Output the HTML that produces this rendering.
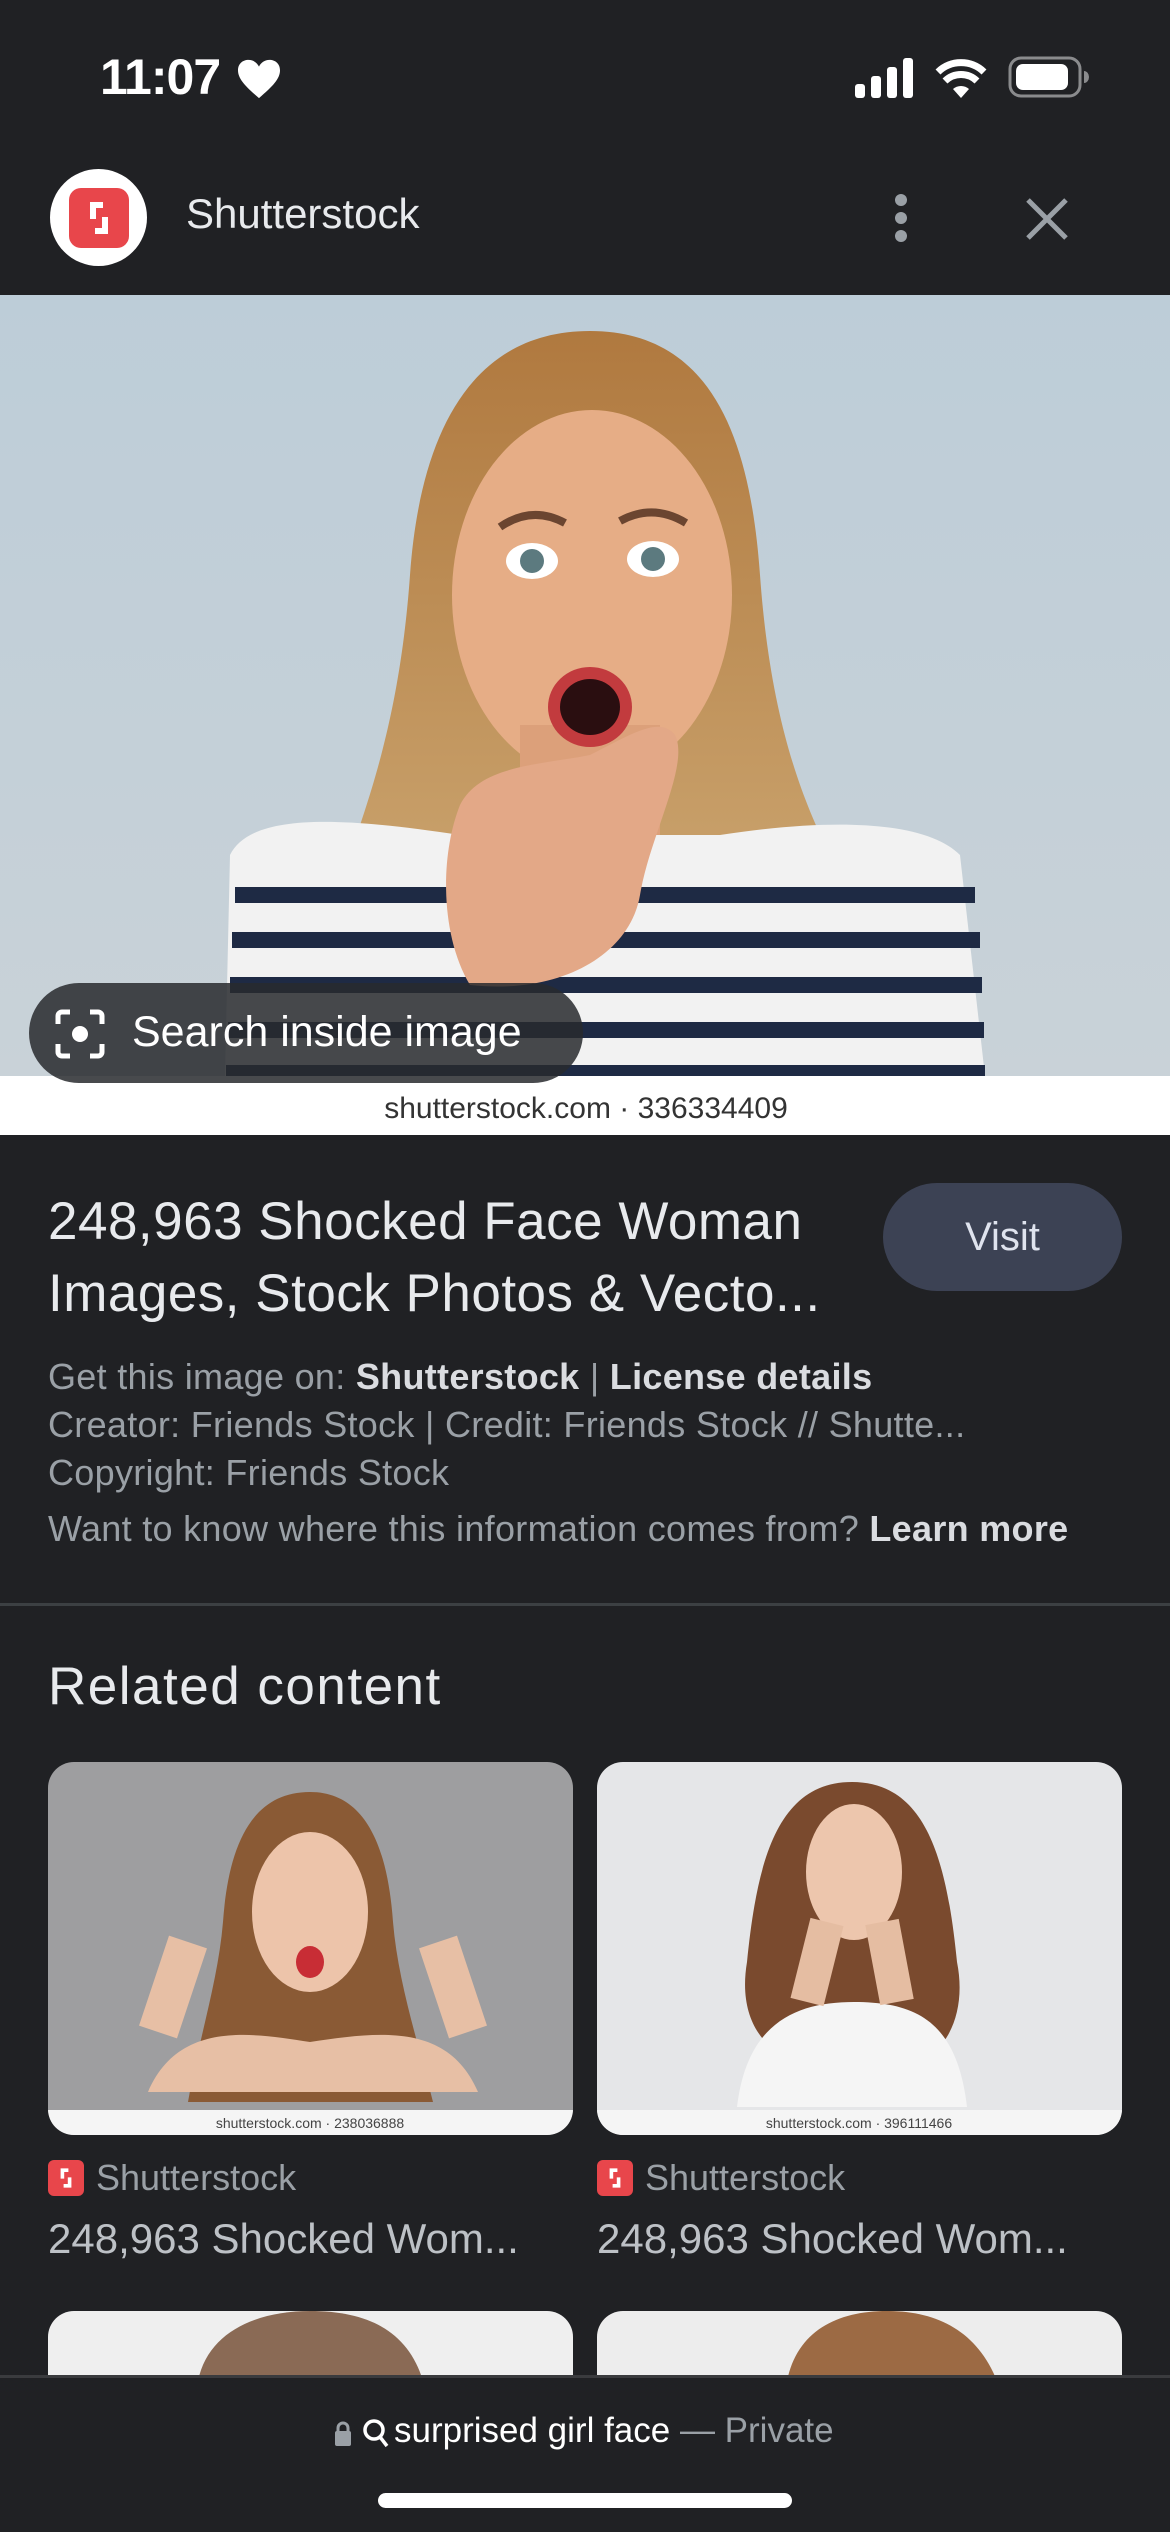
<!DOCTYPE html>
<html><head><meta charset="utf-8">
<style>
*{margin:0;padding:0;box-sizing:border-box}
html,body{width:1170px;height:2532px;background:#202124;overflow:hidden;font-family:"Liberation Sans",Arial,sans-serif;color:#e8eaed}
.abs{position:absolute}
</style></head><body>
<div class="abs" style="left:0;top:0;width:1170px;height:2532px;background:#202124">

<div class="abs" style="left:100px;top:48px;font-size:50px;font-weight:600;color:#fff;letter-spacing:-1px">11:07</div>
<svg class="abs" style="left:236px;top:58px" width="46" height="42" viewBox="0 0 24 22"><path d="M12 21 C5 15 1 11 1 6.5 C1 3 3.5 1 6.5 1 C9 1 11 2.5 12 4.5 C13 2.5 15 1 17.5 1 C20.5 1 23 3 23 6.5 C23 11 19 15 12 21Z" fill="#fff"/></svg>
<svg class="abs" style="left:855px;top:58px" width="60" height="40"><rect x="0" y="26" width="10" height="14" rx="3" fill="#fff"/><rect x="16" y="18" width="10" height="22" rx="3" fill="#fff"/><rect x="32" y="9" width="10" height="31" rx="3" fill="#fff"/><rect x="48" y="0" width="10" height="40" rx="3" fill="#fff"/></svg>
<svg class="abs" style="left:935px;top:58px" width="52" height="40" viewBox="0 0 52 40"><path d="M26 40 L18 31 A12 12 0 0 1 34 31Z" fill="#fff"/><path d="M10 23 A23 23 0 0 1 42 23" stroke="#fff" stroke-width="7" fill="none"/><path d="M3 14 A33 33 0 0 1 49 14" stroke="#fff" stroke-width="7" fill="none"/></svg>
<svg class="abs" style="left:1008px;top:56px" width="82" height="42"><rect x="2" y="2" width="70" height="38" rx="11" fill="none" stroke="#8a8b8d" stroke-width="3"/><rect x="8" y="8" width="52" height="26" rx="7" fill="#fff"/><path d="M76 15 a5 6 0 0 1 0 12z" fill="#8a8b8d"/></svg>

<div class="abs" style="left:50px;top:169px;width:97px;height:97px;border-radius:50%;background:#fff"></div>
<div class="abs" style="left:69px;top:188px;width:60px;height:60px;border-radius:12px;background:#e8464b"></div>
<svg class="abs" style="left:69px;top:188px" width="60" height="60" viewBox="0 0 60 60"><path d="M34 17 H24 V31" stroke="#fff" stroke-width="6" fill="none"/><path d="M26 43 H36 V29" stroke="#fff" stroke-width="6" fill="none"/></svg>
<div class="abs" style="left:186px;top:190px;font-size:42px;color:#e8eaed">Shutterstock</div>
<svg class="abs" style="left:890px;top:192px" width="22" height="52"><circle cx="11" cy="8" r="6" fill="#9aa0a6"/><circle cx="11" cy="26" r="6" fill="#9aa0a6"/><circle cx="11" cy="44" r="6" fill="#9aa0a6"/></svg>
<svg class="abs" style="left:1024px;top:196px" width="46" height="46"><path d="M4 4 L42 42 M42 4 L4 42" stroke="#9aa0a6" stroke-width="5"/></svg>

<svg class="abs" style="left:0;top:295px" width="1170" height="840" viewBox="0 0 1170 840">
<defs><linearGradient id="bg" x1="0" y1="0" x2="0" y2="1"><stop offset="0" stop-color="#bdcdd8"/><stop offset="1" stop-color="#c9d2d8"/></linearGradient>
<linearGradient id="hair" x1="0" y1="0" x2="0" y2="1"><stop offset="0" stop-color="#b0793f"/><stop offset="1" stop-color="#c8a06a"/></linearGradient></defs>
<rect width="1170" height="781" fill="url(#bg)"/>
<path d="M590 36 C470 36 420 140 410 280 C400 420 370 500 350 560 L830 560 C800 500 770 420 760 280 C750 140 710 36 590 36Z" fill="url(#hair)"/>
<ellipse cx="592" cy="300" rx="140" ry="185" fill="#e6ad86"/>
<path d="M520 430 L520 560 L660 560 L660 430Z" fill="#dca07a"/>
<path d="M230 560 C250 520 330 520 460 540 L720 540 C850 520 930 530 960 560 L985 781 L225 781Z" fill="#f2f2f2"/>
<g stroke="#1e2a44" stroke-width="16" fill="none">
<path d="M235 600 H975"/><path d="M232 645 H980"/><path d="M230 690 H982"/><path d="M228 735 H984"/><path d="M226 778 H985"/></g>
<ellipse cx="532" cy="266" rx="26" ry="18" fill="#fff"/><circle cx="532" cy="266" r="12" fill="#5c7a7f"/>
<ellipse cx="653" cy="264" rx="26" ry="18" fill="#fff"/><circle cx="653" cy="264" r="12" fill="#5c7a7f"/>
<path d="M500 232 Q532 210 565 228" stroke="#6b4530" stroke-width="8" fill="none"/><path d="M620 226 Q653 208 686 228" stroke="#6b4530" stroke-width="8" fill="none"/>
<ellipse cx="590" cy="412" rx="42" ry="40" fill="#c23b3e"/><ellipse cx="590" cy="412" rx="30" ry="28" fill="#2a0e10"/>
<path d="M460 510 C480 470 540 470 590 460 C630 440 660 420 675 440 C690 470 650 540 640 600 C630 660 560 700 470 690 C440 640 440 560 460 510Z" fill="#e3a887"/>
<rect x="0" y="781" width="1170" height="59" fill="#fff"/>
<text x="586" y="823" text-anchor="middle" font-family="Liberation Sans,sans-serif" font-size="30" fill="#333">shutterstock.com · 336334409</text>
</svg>
<div class="abs" style="left:29px;top:983px;width:554px;height:100px;border-radius:50px;background:rgba(40,42,46,0.85)"></div>
<svg class="abs" style="left:54px;top:1008px" width="52" height="52" viewBox="0 0 52 52"><path d="M4 16 V8 a4 4 0 0 1 4 -4 H16 M36 4 H44 a4 4 0 0 1 4 4 V16 M48 36 V44 a4 4 0 0 1 -4 4 H36 M16 48 H8 a4 4 0 0 1 -4 -4 V36" stroke="#fff" stroke-width="5" fill="none"/><circle cx="26" cy="26" r="8" fill="#fff"/></svg>
<div class="abs" style="left:132px;top:1008px;font-size:43px;color:#fff">Search inside image</div>

<div class="abs" style="left:48px;top:1186px;font-size:53px;line-height:72px;color:#e8eaed;width:840px;letter-spacing:0.5px">248,963 Shocked Face Woman<br>Images, Stock Photos &amp; Vecto...</div>
<div class="abs" style="left:883px;top:1183px;width:239px;height:108px;border-radius:54px;background:#3c4254;color:#dfe3ee;font-size:40px;text-align:center;line-height:108px">Visit</div>

<div class="abs" style="left:48px;top:1353px;font-size:36px;line-height:48px;color:#9aa0a6;letter-spacing:0.3px">Get this image on: <b style="color:#dadce0">Shutterstock</b> | <b style="color:#dadce0">License details</b><br>Creator: Friends Stock | Credit: Friends Stock // Shutte...<br>Copyright: Friends Stock</div>
<div class="abs" style="left:48px;top:1508px;font-size:36px;color:#9aa0a6;letter-spacing:0.3px">Want to know where this information comes from? <b style="color:#dadce0">Learn more</b></div>
<div class="abs" style="left:0;top:1603px;width:1170px;height:3px;background:#3c4043"></div>

<div class="abs" style="left:48px;top:1656px;font-size:53px;color:#e8eaed;letter-spacing:1.5px">Related content</div>

<svg class="abs" style="left:48px;top:1762px" width="525" height="373"><defs><clipPath id="c1"><rect width="525" height="373" rx="26"/></clipPath></defs><g clip-path="url(#c1)"><rect width="525" height="373" fill="#9e9ea0"/><path d="M262 30 C200 30 180 90 175 160 C170 220 150 280 140 340 L385 340 C370 280 350 220 345 160 C340 90 320 30 262 30Z" fill="#8a5a35"/><ellipse cx="262" cy="150" rx="58" ry="80" fill="#edc4aa"/><ellipse cx="262" cy="200" rx="14" ry="16" fill="#c82d35"/><path d="M100 330 C130 260 200 270 262 280 C330 270 400 260 430 330 Z" fill="#e7bfa5"/><path d="M140 180 L110 270 M390 180 L420 270" stroke="#e7bfa5" stroke-width="40"/><rect y="348" width="525" height="25" fill="#f5f5f5"/><text x="262" y="366" text-anchor="middle" font-size="14" fill="#444" font-family="Liberation Sans">shutterstock.com · 238036888</text></g></svg>
<svg class="abs" style="left:597px;top:1762px" width="525" height="373"><defs><clipPath id="c2"><rect width="525" height="373" rx="26"/></clipPath></defs><g clip-path="url(#c2)"><rect width="525" height="373" fill="#e5e6e8"/><path d="M255 20 C180 20 160 100 150 200 C140 260 170 290 200 300 L320 300 C350 290 370 250 360 200 C350 100 330 20 255 20Z" fill="#7a4a2e"/><ellipse cx="257" cy="110" rx="48" ry="68" fill="#edc6ad"/><path d="M140 345 C150 260 200 240 257 240 C320 240 360 260 370 345Z" fill="#f5f5f5"/><path d="M210 240 L230 160 M300 240 L285 160" stroke="#e5bda2" stroke-width="34"/><rect y="348" width="525" height="25" fill="#f5f5f5"/><text x="262" y="366" text-anchor="middle" font-size="14" fill="#444" font-family="Liberation Sans">shutterstock.com · 396111466</text></g></svg>

<div class="abs" style="left:48px;top:2160px;width:36px;height:36px;border-radius:6px;background:#e8464b"></div>
<svg class="abs" style="left:48px;top:2160px" width="36" height="36" viewBox="0 0 60 60"><path d="M34 17 H24 V31" stroke="#fff" stroke-width="6" fill="none"/><path d="M26 43 H36 V29" stroke="#fff" stroke-width="6" fill="none"/></svg>
<div class="abs" style="left:96px;top:2157px;font-size:36px;color:#9aa0a6">Shutterstock</div>
<div class="abs" style="left:597px;top:2160px;width:36px;height:36px;border-radius:6px;background:#e8464b"></div>
<svg class="abs" style="left:597px;top:2160px" width="36" height="36" viewBox="0 0 60 60"><path d="M34 17 H24 V31" stroke="#fff" stroke-width="6" fill="none"/><path d="M26 43 H36 V29" stroke="#fff" stroke-width="6" fill="none"/></svg>
<div class="abs" style="left:645px;top:2157px;font-size:36px;color:#9aa0a6">Shutterstock</div>
<div class="abs" style="left:48px;top:2215px;font-size:42px;color:#bdc1c6">248,963 Shocked Wom...</div>
<div class="abs" style="left:597px;top:2215px;font-size:42px;color:#bdc1c6">248,963 Shocked Wom...</div>

<svg class="abs" style="left:48px;top:2311px" width="525" height="70"><defs><clipPath id="c3"><rect width="525" height="120" rx="26"/></clipPath></defs><g clip-path="url(#c3)"><rect width="525" height="70" fill="#efefef"/><path d="M150 70 C160 20 210 0 262 0 C320 0 360 20 375 70Z" fill="#8a6a55"/></g></svg>
<svg class="abs" style="left:597px;top:2311px" width="525" height="70"><defs><clipPath id="c4"><rect width="525" height="120" rx="26"/></clipPath></defs><g clip-path="url(#c4)"><rect width="525" height="70" fill="#ededed"/><path d="M190 70 C200 20 240 0 290 0 C340 0 380 20 400 70Z" fill="#9c6a44"/></g></svg>

<div class="abs" style="left:0;top:2375px;width:1170px;height:157px;background:#202124;border-top:3px solid #3a3b3e"></div>
<svg class="abs" style="left:334px;top:2420px" width="18" height="26"><path d="M4 12 V8 a5 5 0 0 1 10 0 V12" stroke="#9aa0a6" stroke-width="3" fill="none"/><rect x="1" y="11" width="16" height="15" rx="2" fill="#9aa0a6"/></svg>
<svg class="abs" style="left:362px;top:2418px" width="28" height="32"><circle cx="12" cy="12" r="9" stroke="#fff" stroke-width="3.5" fill="none"/><path d="M18 19 L25 28" stroke="#fff" stroke-width="3.5"/></svg>
<div class="abs" style="left:394px;top:2411px;font-size:35px;color:#fff">surprised girl face <span style="color:#9aa0a6">— Private</span></div>
<div class="abs" style="left:378px;top:2493px;width:414px;height:15px;border-radius:8px;background:#fff"></div>
</div>
</body></html>
